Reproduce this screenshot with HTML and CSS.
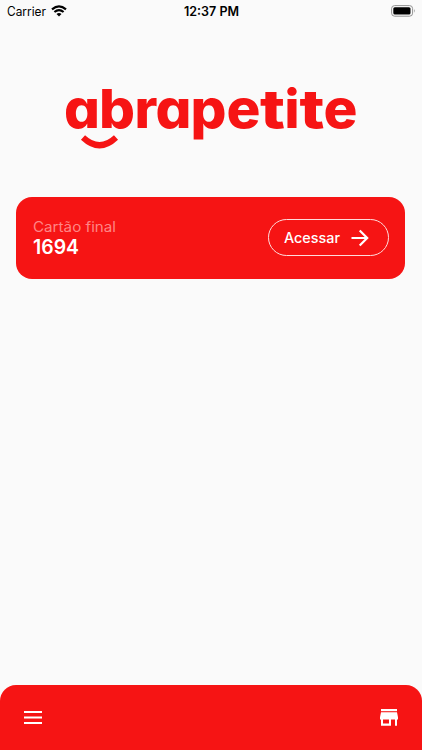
FILE: index.html
```html
<!DOCTYPE html>
<html lang="pt-BR">
<head>
<meta charset="utf-8">
<meta name="viewport" content="width=device-width, initial-scale=1">
<title>abrapetite</title>
<link rel="stylesheet" href="styles.css">
</head>
<body>
<div class="app">
  <header class="status">
    <div class="carrier">
      <svg width="39" height="18"><text x="0" y="15.500" textLength="39" lengthAdjust="spacingAndGlyphs">Carrier</text></svg>
      <svg class="wifi" width="16" height="12" viewBox="0 0 16 12"><path d="M1 4.3Q8-1.7 15 4.3M3.4 7Q8 3.2 12.6 7" fill="none" stroke="#000" stroke-width="2.2"/><path d="M5.5 9Q8 7 10.5 9L8 11.5Z"/></svg>
    </div>
    <svg class="time" width="56" height="18"><text x="0" y="15.500" textLength="55" lengthAdjust="spacingAndGlyphs">12:37 PM</text></svg>
    <svg class="battery" width="25" height="12" viewBox="0 0 25 12"><rect x=".6" y=".6" width="21" height="10.6" rx="3" fill="none" stroke="#929292"/><rect x="2.3" y="2.3" width="17.2" height="7.2" rx="1.5"/><path d="M23 4Q24.3 5.8 23 7.8Z" fill="#777"/></svg>
  </header>
  <main>
    <svg class="logo" width="300" height="80" viewBox="60 75 300 80">
      <text y="128"><tspan x="64" textLength="36" lengthAdjust="spacingAndGlyphs">a</tspan><tspan x="99" textLength="36" lengthAdjust="spacingAndGlyphs">b</tspan><tspan x="134.500" textLength="23" lengthAdjust="spacingAndGlyphs">r</tspan><tspan x="155.500" textLength="36" lengthAdjust="spacingAndGlyphs">a</tspan><tspan x="190.500" textLength="36" lengthAdjust="spacingAndGlyphs">p</tspan><tspan x="226.500" textLength="34" lengthAdjust="spacingAndGlyphs">e</tspan><tspan x="260" textLength="25" lengthAdjust="spacingAndGlyphs">t</tspan><tspan x="284.500" textLength="15" lengthAdjust="spacingAndGlyphs">i</tspan><tspan x="299.500" textLength="25" lengthAdjust="spacingAndGlyphs">t</tspan><tspan x="323.500" textLength="34" lengthAdjust="spacingAndGlyphs">e</tspan></text>
      <path d="M83 137.500Q99.500 153 116 137.500" fill="none" stroke="#f61414" stroke-width="6"/>
    </svg>
    <section class="card">
      <svg class="details" width="90" height="46">
        <text class="label" x="0" y="16.500" textLength="83" lengthAdjust="spacingAndGlyphs">Cartão final</text>
        <text class="digits" x="0" y="39" textLength="46" lengthAdjust="spacingAndGlyphs">1694</text>
      </svg>
      <button class="access">
        <svg width="56" height="24"><text x="0" y="17" textLength="56" lengthAdjust="spacingAndGlyphs">Acessar</text></svg>
        <svg width="18" height="18" viewBox="0 0 18 18"><path d="M.5 9H16.500M8.700 1.500L16.200 9L8.700 16.500" fill="none" stroke="#fff" stroke-width="2.200"/></svg>
      </button>
    </section>
  </main>
  <nav class="bottom">
    <svg width="18" height="13" viewBox="0 0 18 13"><path d="M0 1H18M0 6.500H18M0 12H18" stroke="#fff" stroke-width="2"/></svg>
    <svg width="18" height="17" viewBox="0 0 18 17" fill="#fff"><path d="M1 0H17V2.200H1Z"/><path fill-rule="evenodd" d="M1 3.200H17L18 8.200V10.500H17V16.800H15V10.500H11V16.800H1V10.500H0V8.200ZM3 10.500V14.600H9V10.500Z"/></svg>
  </nav>
</div>
</body>
</html>
```
FILE: styles.css
```css
* { box-sizing: border-box; }
body { margin: 0; background: #fafafa; font-family: Inter, sans-serif; }
svg { display: block; flex: none; overflow: visible; }
.app { height: 750px; display: flex; flex-direction: column; }
.status { height: 22px; padding: 0 6px 0 7px; display: grid; grid-template-columns: 1fr 56px 1fr; font-size: 12.5px; }
.carrier { display: flex; gap: 5px; }
.wifi { margin-top: 5px; }
.time { font-weight: 600; }
.battery { justify-self: end; margin-top: 5px; }
main { flex: 1; padding: 53px 17px 0 16px; }
.logo { margin: 0 0 42px 44px; }
.logo text { fill: #f61414; font-size: 54px; font-weight: 800; font-feature-settings: "cv11"; }
.card { height: 81.5px; border-radius: 16px; background: #f61414; padding: 0 16px 0 17px; display: flex; align-items: center; justify-content: space-between; }
.details text { fill: #fff; }
.details .label { fill: #ff8585; font-size: 14px; }
.details .digits { font-size: 20px; font-weight: 600; }
.access { width: 121px; height: 37px; border: 1px solid #ffdcdc; border-radius: 19px; background: transparent; padding: 0 19px 0 15px; display: flex; align-items: center; justify-content: space-between; }
.access text { fill: #fff; font-family: Inter, sans-serif; font-size: 14px; font-weight: 500; }
.bottom { height: 65.5px; border-radius: 16px 16px 0 0; background: #f61414; padding: 0 24px; display: flex; align-items: center; justify-content: space-between; }
```
